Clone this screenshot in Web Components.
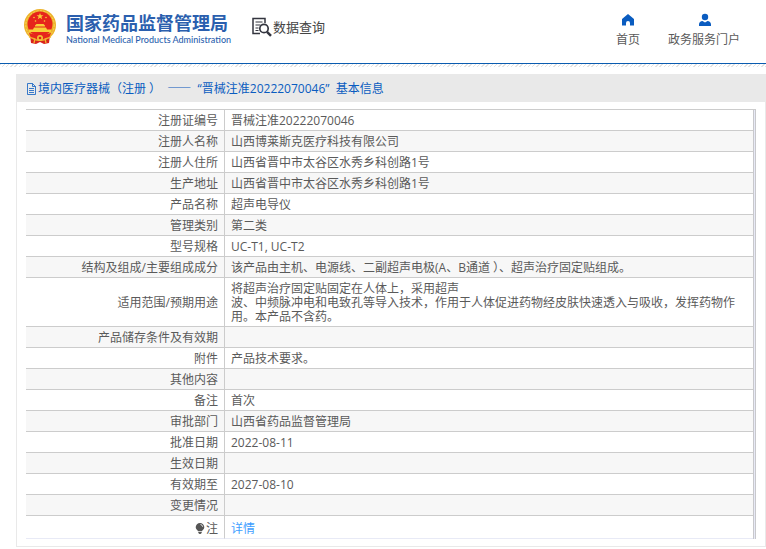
<!DOCTYPE html>
<html lang="zh-CN">
<head>
<meta charset="utf-8">
<title>数据查询</title>
<style>
body{margin:0;background:#fff;color:#5a5a5a;font:12px/14px "Open Sans","Noto Sans CJK SC",sans-serif}
.dash{font-family:"Noto Sans CJK SC",sans-serif}
</style>
</head>
<body>
<site-header>
  <nav-link slot="nav" href="#home">
    <svg slot="icon" width="14" height="14" viewBox="0 0 14 14"><path fill="#0a5cc0" d="M7 1 1 6v6.500h4V10a2 2 0 0 1 4 0v2.500h4V6z"/></svg>首页</nav-link>
  <nav-link slot="nav" href="#portal">
    <svg slot="icon" width="14" height="14" viewBox="0 0 14 14"><circle cx="8" cy="4" r="3.200" fill="#0a5cc0"/><path fill="#0a5cc0" d="M2 13v-1.500C2 9.300 3.600 8.200 5.500 8L8 9.500 10.500 8c1.900.2 3.500 1.300 3.500 3.500V13z"/></svg>政务服务门户</nav-link>
</site-header>
<info-panel>
  <span slot="title">境内医疗器械（注册 ）&nbsp; <span class="dash">——</span>&nbsp; “晋械注准20222070046”&nbsp; 基本信息</span>
  <record-table></record-table>
</info-panel>

<template id="site-header">
<style>
:host{display:block}
header{display:flex;justify-content:space-between;align-items:flex-start;height:63px;border-bottom:1px solid #0a5cb0;padding:0 26px 0 24px;box-sizing:content-box}
.brand{display:flex;align-items:flex-start;padding-top:9px}
.name{display:grid;margin-left:10px;color:#2b5fae}
.cn{font:bold 18px/26px "Noto Sans CJK SC",sans-serif}
.en{font:500 9px/10px Lato,sans-serif;white-space:nowrap}
.query{display:flex;align-items:center;margin:8px 0 0 20px;color:#444;font-size:13px;line-height:18px}
nav{display:flex;gap:28px;padding-top:13px}
.hatch{height:3px;background:repeating-linear-gradient(135deg,#e3e3e3 0 1px,#fff 1px 3px)}
</style>
<header>
  <div class="brand">
    <svg width="32" height="36" viewBox="0 0 32 36">
      <path d="M6 26h20l-1 8-5 1-4-2-4 2-5-1z" fill="#d9231c"/>
      <circle cx="16" cy="16" r="16" fill="#edb32b"/>
      <circle cx="16" cy="16" r="14.200" fill="none" stroke="#f8d560" stroke-width="1" stroke-dasharray="2 1.500"/>
      <circle cx="16" cy="15" r="12.500" fill="#e6251c"/>
      <path fill="#f8cf38" d="m16 4 .9 2.300h2.500l-2 1.500.8 2.400-2.200-1.500-2.200 1.500.8-2.400-2-1.500h2.500z"/>
      <g fill="#f8cf38"><circle cx="10" cy="8.500" r=".8"/><circle cx="22" cy="8.500" r=".8"/><circle cx="11.500" cy="12" r=".8"/><circle cx="20.500" cy="12" r=".8"/><path d="M11 16.500 12.500 15h7l1.500 1.500v1H11zM10 18.500h12l1 2h4v2.500H5v-2.500h4z"/></g>
      <path d="M5 24q11 4 22 0l-2 5q-9 3-18 0z" fill="#e6251c"/>
      <circle cx="16" cy="29" r="3" fill="#f2c033"/><circle cx="16" cy="29" r="1.300" fill="#d9231c"/>
      <path d="M5 28l6 2-1 4M27 28l-6 2 1 4" fill="none" stroke="#f2b62b" stroke-width="1.300"/>
    </svg>
    <div class="name"><span class="cn">国家药品监督管理局</span><span class="en">National Medical Products Administration</span></div>
    <div class="query">
      <svg width="22" height="20" viewBox="0 0 22 20" fill="none" stroke="#33353f"><path stroke-width="1.500" d="M14 6V1.500H2v15h7"/><path d="M4.500 5h7M4.500 8h5M4.500 11h3M4.500 13.500h3"/><circle cx="13" cy="11.500" r="4.200" stroke-width="1.700"/><path stroke-width="2.500" d="m16 14.800 4 4"/></svg><span>数据查询</span>
    </div>
  </div>
  <nav><slot name="nav"></slot></nav>
</header>
<div class="hatch"></div>
</template>

<template id="nav-link">
<style>
:host{display:block}
a{display:flex;flex-direction:column;align-items:center;gap:6px;color:#5a5a5a;text-decoration:none}
</style>
<a><slot name="icon"></slot><span><slot></slot></span></a>
</template>

<template id="info-panel">
<style>
:host{display:block;margin:7px 0 2px 16px}
section{border:1px solid #e9e9e9}
h1{display:flex;align-items:center;margin:0;padding:0 9px;height:27px;background:#e9e9e9;color:#0a5cc0;font:inherit}
svg{margin-right:1px}
.body{padding:7px 9px}
</style>
<section>
<h1><svg width="11" height="12" viewBox="0 0 11 12" fill="none" stroke="#0a5cc0" stroke-width=".8"><path d="M1.500.5h5l3 3v8h-8zM6.500.5v3h3M3 5.500h5M3 7.500h5M3 9.500h5"/></svg><slot name="title"></slot></h1>
<div class="body"><slot></slot></div>
</section>
</template>

<template id="record-table">
<style>
:host{display:block;border-right:1px solid #c8c8cc;border-top:1px solid #ccc;padding-right:1px;background:#e8eaf6}
table{width:100%;border-spacing:0;table-layout:fixed;border-right:1px solid #c8c8cc;background:#fff}
col.label{width:199px}
th,td{padding:4px 6px 2px;height:14px;border-bottom:1px solid #ccc;vertical-align:middle;line-height:14px;white-space:pre-line}
th{font-weight:400;text-align:right;border-right:1px solid #ccc}
tr:nth-child(even){background:#f7f7f7}
tr:last-child>*{padding-top:6px;border-bottom-color:#e8eaf6}
a{color:#409eff;text-decoration:none}
svg{vertical-align:-1px;margin-right:1px}
</style>
<table><colgroup><col class="label"><col></colgroup><tbody>
<tr><th scope="row"><svg width="10" height="11" viewBox="0 0 10 11"><path fill="#555" d="M5 0a4.300 4.300 0 0 1 4.300 4.300C9.300 6 7.500 7 7 8.300H3C2.500 7 .7 6 .7 4.300A4.300 4.300 0 0 1 5 0zM3.300 9h3.400v1L5.500 11h-1l-1.200-1z"/><path d="M5.500 1.500q2 .3 2.200 2.300" fill="none" stroke="#fff" stroke-width=".8"/></svg>注</th><td><a href="#detail">详情</a></td></tr>
</tbody></table>
</template>

<script>
const attach = el => {
  const root = el.attachShadow({mode: 'open'});
  root.append(document.getElementById(el.localName).content.cloneNode(true));
  return root;
};
customElements.define('site-header', class extends HTMLElement {
  constructor() { super(); attach(this); }
});
customElements.define('nav-link', class extends HTMLElement {
  constructor() { super(); attach(this).querySelector('a').href = this.getAttribute('href'); }
});
customElements.define('info-panel', class extends HTMLElement {
  constructor() { super(); attach(this); }
});
const records = [
  ['注册证编号', '晋械注准20222070046'],
  ['注册人名称', '山西博莱斯克医疗科技有限公司'],
  ['注册人住所', '山西省晋中市太谷区水秀乡科创路1号'],
  ['生产地址', '山西省晋中市太谷区水秀乡科创路1号'],
  ['产品名称', '超声电导仪'],
  ['管理类别', '第二类'],
  ['型号规格', 'UC-T1, UC-T2'],
  ['结构及组成/主要组成成分', '该产品由主机、电源线、二副超声电极(A、B通道 ）、超声治疗固定贴组成。'],
  ['适用范围/预期用途', '将超声治疗固定贴固定在人体上，采用超声\n波、中频脉冲电和电致孔等导入技术，作用于人体促进药物经皮肤快速透入与吸收，发挥药物作用。本产品不含药。'],
  ['产品储存条件及有效期', ''],
  ['附件', '产品技术要求。'],
  ['其他内容', ''],
  ['备注', '首次'],
  ['审批部门', '山西省药品监督管理局'],
  ['批准日期', '2022-08-11'],
  ['生效日期', ''],
  ['有效期至', '2027-08-10'],
  ['变更情况', '']
];
customElements.define('record-table', class extends HTMLElement {
  constructor() {
    super();
    const body = attach(this).querySelector('tbody');
    const last = body.firstElementChild;
    for (const [label, value] of records) {
      const row = document.createElement('tr');
      const th = document.createElement('th');
      const td = document.createElement('td');
      th.scope = 'row';
      th.textContent = label;
      td.textContent = value;
      row.append(th, td);
      body.insertBefore(row, last);
    }
  }
});
</script>
</body>
</html>
